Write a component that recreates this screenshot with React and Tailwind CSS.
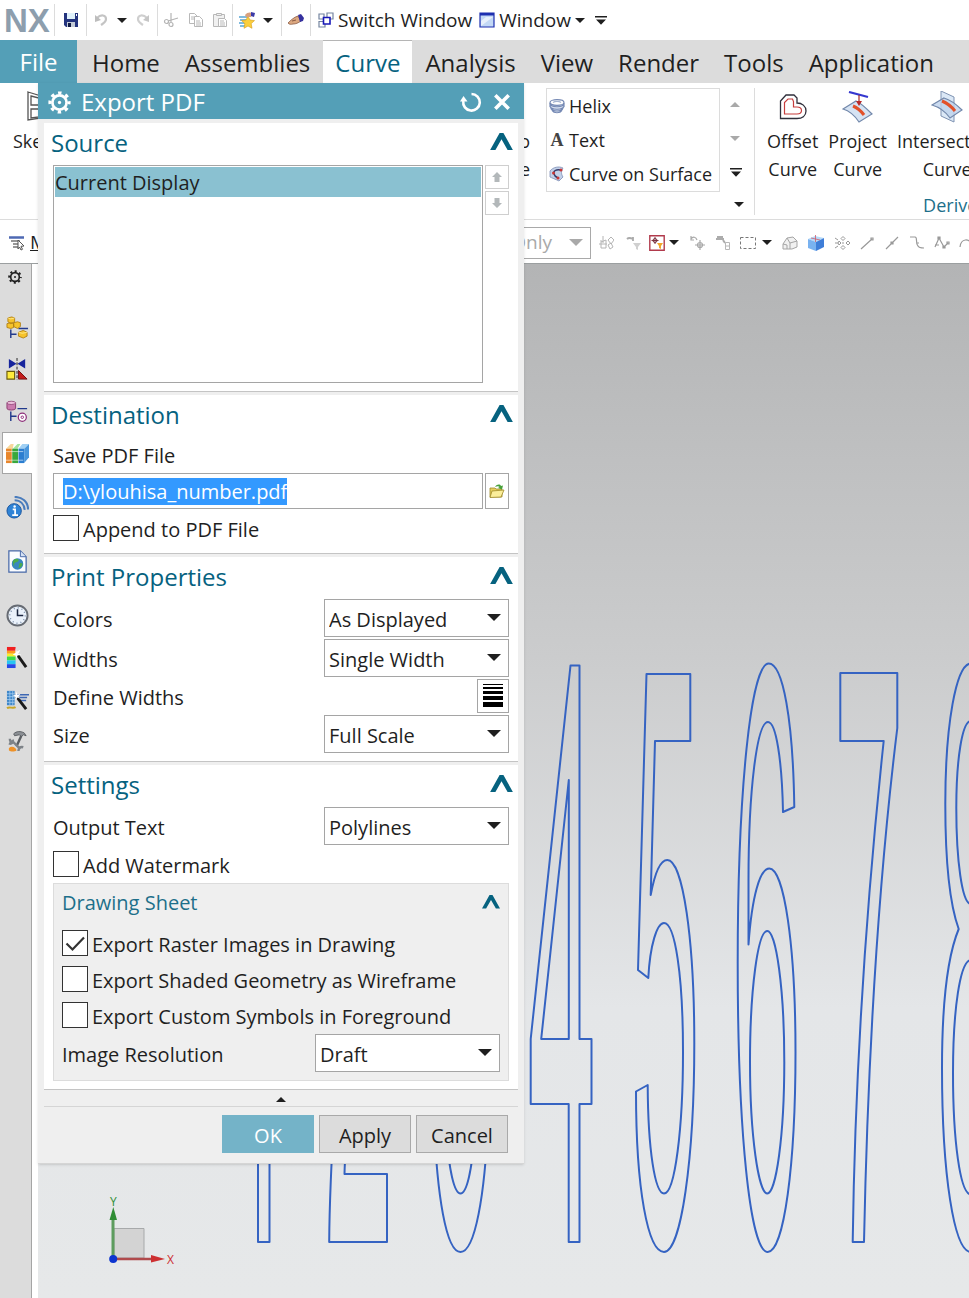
import React, { useEffect, useRef, useState } from 'react';

const Caret = ({ className = "w-2.5", up = false }) => (
  <svg viewBox="0 0 10 5" className={className} fill="currentColor" aria-hidden="true">
    <path d={up ? "M0 5 5 0l5 5z" : "M0 0h10L5 5z"} />
  </svg>
);

const MoreCaret = () => (
  <svg viewBox="0 0 12 9" className="w-3" fill="currentColor" aria-hidden="true">
    <path d="M0 0h12v1.4H0zM1 3.6h10L6 8.8z" />
  </svg>
);

const Divider = () => <span className="w-px h-8 bg-[#dcdcdc]" />;

const GearIcon = ({ className }) => (
  <svg viewBox="0 0 24 24" className={className} fill="none" stroke="currentColor" aria-hidden="true">
    <circle cx="12" cy="12" r="7.4" strokeWidth="2.8" />
    <circle cx="12" cy="12" r="10" strokeWidth="3.2" strokeDasharray="3.6 4.254" strokeDashoffset="1.8" />
    <circle cx="12" cy="12" r="1.7" fill="currentColor" stroke="none" />
  </svg>
);

const icons = {
  save: (
    <svg viewBox="0 0 16 16" className="w-4">
      <path d="M1 1h14v14H3l-2-2z" fill="#24347e" />
      <path d="M4 1h8v6H4z" fill="#dff1fb" />
      <path d="M4 10h8v5H4z" fill="#c3cbd6" />
      <path d="M5 11h3v4H5z" fill="#111a44" />
      <path d="M13 2h1v2h-1z" fill="#fff" />
    </svg>
  ),
  undo: (
    <svg viewBox="0 0 16 16" className="w-4" fill="none">
      <path d="M4 6c4-4 9-3 9 1 0 3-2 4-5 6" stroke="#c4c4c4" strokeWidth="2.200" />
      <path d="M2 10V3l6 5z" fill="#bdbdbd" />
    </svg>
  ),
  redo: (
    <svg viewBox="0 0 16 16" className="w-4" fill="none">
      <path d="M12 6C8 2 3 3 3 7c0 3 2 4 5 6" stroke="#cfcfcf" strokeWidth="2.200" />
      <path d="M14 10V3L8 8z" fill="#c6c6c6" />
    </svg>
  ),
  cut: (
    <svg viewBox="0 0 16 16" className="w-4" fill="none" stroke="#b5b5b5" strokeWidth="1.200">
      <path d="M8 1v9M15 6 5 9" />
      <circle cx="3.500" cy="9.500" r="2" />
      <circle cx="8" cy="12.500" r="2" />
    </svg>
  ),
  copy: (
    <svg viewBox="0 0 16 16" className="w-4" fill="#fff" stroke="#b8b8b8">
      <path d="M1.500 1.500h5l3 3v7h-8z" />
      <path d="M6.500 4.500h5l3 3v7h-8z" />
      <path d="M3 5h3M3 7h3M8 9h4M8 11h5M8 13h5" />
    </svg>
  ),
  paste: (
    <svg viewBox="0 0 16 16" className="w-4" fill="#f1f1f1" stroke="#b8b8b8">
      <path d="M1.500 2.500h11v12h-11z" />
      <path d="M4.500 1.500h5v2h-5z" />
      <path d="M6.500 6.500h6l2 2v6h-8z" fill="#fff" />
      <path d="M8 9h4M8 11h5M8 13h5" />
    </svg>
  ),
  star: (
    <svg viewBox="0 0 18 18" className="w-[18px]">
      <path d="M1 6h9M2 9h7M1 12h6M2 15h6" stroke="#55a5d5" strokeWidth="1.500" />
      <path d="m10 5 2 4 4.500.6-3.300 3 .8 4.700-4-2.300-4 2.300.8-4.700-3.300-3L8 9z" fill="#fbcf3c" stroke="#d79c18" strokeWidth=".6" />
      <path d="M7 4c2-3 5-3 8-2l-2 4H8z" fill="#d8a17e" />
      <path d="m13 1 4 1-1 4-3-1z" fill="#3b3aa8" />
    </svg>
  ),
  hand: (
    <svg viewBox="0 0 18 18" className="w-[18px]">
      <path d="M1 12c2-2 6-6 10-7l3 5c-3 2-5 3-8 3-2 .5-4 .5-5-1z" fill="#dca880" stroke="#8a5a42" strokeWidth=".8" />
      <path d="m11 4 3-1 3 4-1 3-3 1z" fill="#35319f" />
      <path d="m5 10 4-1" stroke="#8a5a42" />
    </svg>
  ),
  switchWindow: (
    <svg viewBox="0 0 16 16" className="w-4" fill="#fff" strokeWidth="1.200">
      <path d="M1 2h5v5H1zM9 1h6v6H9zM1 9.500h6v5.500H1z" stroke="#7585a0" />
      <path d="M5.500 5.500h6.500V12H5.500z" stroke="#1818b8" strokeWidth="1.600" />
    </svg>
  ),
  window: (
    <svg viewBox="0 0 16 16" className="w-4">
      <path d="M1 1h14v14H1z" fill="#c3d8f5" stroke="#1d2fb0" strokeWidth="1.200" />
      <path d="M1 1h14v2.500H1z" fill="#1d2fb0" />
      <path d="M2 14V9l5-4h7z" fill="#fff" opacity=".6" />
    </svg>
  ),
  sketch: (
    <svg viewBox="0 0 28 34" className="w-7" fill="none" stroke="#555" strokeWidth="1.300">
      <path d="M1 2l26 8v16L1 30z" />
      <path d="M4 6l8 2v7H4zM4 19h8v8l-8 1z" />
    </svg>
  ),
  helix: (
    <svg viewBox="0 0 16 16" className="w-4" fill="none" stroke="#7589b4" strokeWidth="1.200">
      <path d="M1 5v6c3 4 12 4 13 0l1-6z" fill="#d5deee" stroke="none" />
      <ellipse cx="8" cy="4.500" rx="7" ry="2.800" fill="#fff" />
      <path d="M1 5c0 5 14 5 14 0M1 7.500c0 5 14 5 14 0M2 10c1 4 11 4 12 0M3 12.500c2 3 8 3 10 0M1 5v4M15 5v4" />
      <path d="M4 4.500c2-1.500 6-1.500 8 0" stroke="#a6b4d0" />
    </svg>
  ),
  curveOnSurface: (
    <svg viewBox="0 0 16 16" className="w-4">
      <path d="M1 5c3-4 9-5 13-3-2 3-2 6 0 9l-4 4C6 13 3 12 1 11z" fill="#c2d0e8" stroke="#7d8eb5" strokeWidth=".8" />
      <path d="M12 4c-5-1-8 1-7 4 .4 2 2 3 4 4" fill="none" stroke="#333b68" strokeWidth="1.400" />
      <circle cx="12" cy="4" r="1.500" fill="#c93636" />
      <circle cx="4.500" cy="7" r="1.500" fill="#c93636" />
      <circle cx="9" cy="12" r="1.500" fill="#c93636" />
    </svg>
  ),
  offset: (
    <svg viewBox="0 0 28 28" className="w-7" fill="none">
      <path d="M1.500 25.500V8L7 2h8l3 3v5c5 0 9 3 9 8s-4 7.500-9 7.500z" stroke="#2f2f3b" strokeWidth="1.300" />
      <path d="M5.500 21V9.500L9 6h4.500l1 2.500V14H18c3 0 4.500 1.500 4.500 3.500S21 21 18 21z" stroke="#c63d3d" strokeWidth="1.200" />
    </svg>
  ),
  project: (
    <svg viewBox="0 0 32 32" className="w-8">
      <path d="M1 18 14 10c5 2 10 7 16 13L17 31C13 25 8 20 1 18z" fill="#d6e3f3" stroke="#7288ab" strokeWidth="1.200" />
      <path d="M11 15c5 2 8 5 11 9" fill="none" stroke="#e2512a" strokeWidth="3" />
      <path d="M7 1l19 5" stroke="#3537cf" strokeWidth="2.200" />
      <path d="M17 4v8" stroke="#a42828" strokeWidth="1.200" />
      <path d="M14 10h6l-3 5z" fill="#b92a2a" />
    </svg>
  ),
  intersect: (
    <svg viewBox="0 0 32 32" className="w-8">
      <path d="M10 0 23 6v25l-13-6z" fill="#dbe8f6" stroke="#7e92b2" />
      <path d="M1 14 13 7c7 2 12 6 18 12l-12 8C14 20 8 16 1 14z" fill="#bed2ec" fillOpacity=".8" stroke="#7288ab" strokeWidth="1.200" />
      <path d="M11 10c5 2 9 5 13 10" fill="none" stroke="#e2512a" strokeWidth="3" />
    </svg>
  ),
  menu: (
    <svg viewBox="0 0 18 16" className="w-[18px]" fill="none">
      <path d="M1 2.500h15" stroke="#4e69b3" strokeWidth="2.500" />
      <path d="M3 6h9M5 9h7M5 12h7" stroke="#777" strokeWidth="1.300" />
      <path d="m10 5 6 6-3 .3 1.500 3-1.500.7-1.500-3L10 14z" fill="#fff" stroke="#555" />
    </svg>
  ),
  openFile: (
    <svg viewBox="0 0 16 16" className="w-4">
      <path d="M1 5h5l1 1h6v8H1z" fill="#e4cd5c" stroke="#a08a2a" strokeWidth=".8" />
      <path d="m3 8 12-1-3 7-11 .5z" fill="#fbee9a" stroke="#a08a2a" strokeWidth=".8" />
      <path d="M6 4c2-3 5-3 6-1l2-.5-1 4-4-1.500 1.500-1C10 3 8 3 6 4z" fill="#48a13a" />
    </svg>
  ),
};

const selectionTools = [
  {
    name: "Select Features", cell: "w-[30px]",
    art: <path d="M3 5v8h5V5l-5 2M1 9h8M5 1v7M10 5l3-3 3 3-3 4zM10 10l3-2 2 4-3 2z" stroke="#b4b4b4" />,
  },
  {
    name: "Selection Filter", cell: "w-[25px]",
    art: (
      <g>
        <path d="M1 4c2-2 4-1 6 0M7 2v4" stroke="#aaa" strokeWidth="1.800" />
        <path d="M7 8h8l-3 4v3l-2-1v-2z" fill="#d0d0d0" />
      </g>
    ),
  },
  {
    name: "Snap Point Filter", cell: "w-[22px]",
    art: (
      <g>
        <path d="M.8.8h14.400v14.400H.8z" stroke="#b13a4c" strokeWidth="1.400" />
        <path d="M6 2v7M2.500 5.500h7" stroke="#7a3340" />
        <circle cx="6" cy="5.500" r="2" stroke="#7a3340" />
        <path d="M8 8h6l-2 3v3l-2-1v-2z" fill="#f2a62c" />
      </g>
    ),
    menu: true,
  },
  {
    name: "Reset Filters", cell: "w-[26px]",
    art: <path d="M2 4c2-3 5-2 6 1M2 1v4h3M11 5v10M6 10h10M8.500 10a2.500 2.500 0 1 0 5 0 2.500 2.500 0 0 0-5 0" stroke="#a8a8a8" strokeWidth="1.200" />,
  },
  {
    name: "Top Selection", cell: "w-[25px]",
    art: (
      <g>
        <path d="M1 4h8M2 2h6M8 5l2 3" stroke="#acacac" strokeWidth="2" />
        <path d="M10.500 7.500h4v7h-4zM10 11h5" stroke="#b8b8b8" />
      </g>
    ),
  },
  {
    name: "Rectangle Select", cell: "w-[26px]",
    art: <path d="M.5 2.500h15v11H.5z" stroke="#777" strokeDasharray="3 2" />,
    menu: true,
  },
  {
    name: "Highlight Hidden", cell: "w-[26px]",
    art: (
      <g>
        <path d="m1 9 4-6 6-1 4 4v6l-5 2H1z" fill="#f1f1f1" stroke="#a5a5a5" />
        <path d="m5 3 3 5 7-2M8 8v6M1 9l4 1v4" stroke="#a5a5a5" />
      </g>
    ),
  },
  {
    name: "Shaded View", cell: "w-[26px]",
    art: (
      <g>
        <path d="m0 4 7-3 9 2-8 4z" fill="#b5daf9" />
        <path d="m0 4 8 3v9l-8-3z" fill="#79b2f0" />
        <path d="m8 7 8-4v9l-8 4z" fill="#3f7ed8" />
        <path d="M7.500 0v7M3 3l9 2" stroke="#cf5a68" strokeWidth=".8" />
      </g>
    ),
  },
  {
    name: "Fit to Selection", cell: "w-[25px]",
    art: <path d="M1 3l3 2M1 8h3M1 13l3-2M9 1.500l2 2-2 2-2-2zM9 10.500l2 2-2 2-2-2zM5 6l2 2-2 2-1-2zM14 6l2 2-2 2-2-2zM9 7v2" stroke="#999" />,
  },
  { name: "Snap End Point", cell: "w-[26px]", art: <path d="M2 14 13 4M12 3h2v2h-2z" stroke="#999" strokeWidth="1.200" /> },
  { name: "Snap Mid Point", cell: "w-[24px]", art: <path d="M2 14 14 2M7 7h2v2H7z" stroke="#999" strokeWidth="1.200" /> },
  { name: "Snap Tangent", cell: "w-[25px]", art: <path d="M1 2h5c3 0 0 6 3 9 1 2 3 2 6 2M8 8h2" stroke="#999" strokeWidth="1.200" /> },
  { name: "Snap Pole", cell: "w-[25px]", art: <path d="M1 12 5 3l5 9 4-4M4 2h2v2H4zM9 11h2v2H9zM13 7h2v2h-2zM1 10h4" stroke="#999" strokeWidth="1.200" /> },
  { name: "Snap Arc", cell: "w-[25px]", art: <path d="M1 12c1-9 9-9 13-2" stroke="#999" strokeWidth="1.200" /> },
];

const railGroups = [
  [
    {
      name: "Assembly Navigator",
      art: (
        <g>
          <path d="M5 14v9M5 19h6M13 13h10" stroke="#223a8c" strokeWidth="1.500" />
          <path d="m2 2 4-1 3 1v4l-4 2-3-2zM1 8l4-1 3 1v4l-3 1-4-1zM8 7l4-1 3 1v4l-3 2-4-2zM13 17l5-2 4 2v4l-4 2-5-2z" fill="#f6c32c" stroke="#b07e10" strokeWidth=".9" />
          <path d="m2 2 3 1 4-1M13 17l4 1 5-1" stroke="#fff0a0" strokeWidth=".8" />
        </g>
      ),
    },
    {
      name: "Constraint Navigator",
      art: (
        <g>
          <path d="M3 1v10l8-5zM20 1v10l-8-5z" fill="#16249c" />
          <path d="M11.500 0v23" stroke="#222" strokeDasharray="3 1.500" />
          <path d="M1 14h8v8H1z" fill="#ffec3b" stroke="#6b5b0a" strokeWidth="1.200" />
          <path d="M13 13v9h9z" fill="#c31d1d" stroke="#701010" />
        </g>
      ),
    },
    {
      name: "Part Navigator",
      art: (
        <g>
          <path d="M5 12v10M5 17h6M12 9h10" stroke="#223a8c" strokeWidth="1.500" />
          <path d="M1 3v6c1 2 8 2 9 0V3z" fill="#cb7bae" stroke="#8b3d70" />
          <ellipse cx="5.500" cy="3" rx="4.500" ry="1.700" fill="#edc0dc" stroke="#8b3d70" strokeWidth=".8" />
          <circle cx="17" cy="18" r="4.200" fill="#fff" stroke="#8e2f7a" strokeWidth="1.300" />
          <circle cx="17" cy="18" r="1.300" stroke="#8e2f7a" />
        </g>
      ),
    },
    {
      name: "Reuse Library", active: true,
      art: (
        <g>
          <path d="m0 7 5-5h3L7 7z" fill="#f7d79a" />
          <path d="M0 7h6v15H0z" fill="#e8862c" />
          <path d="m7 7 5-5h3l-3 5z" fill="#a4e3a0" />
          <path d="M6.500 7h6v15h-6z" fill="#39a83c" />
          <path d="m13 7 4-5h7l-5 5z" fill="#a0d0f4" />
          <path d="M13 7h6v15h-6z" fill="#2c7ed0" />
          <path d="m19 7 5-5v14l-5 6z" fill="#4a97dc" />
          <path d="M0 10h18M0 19h18" stroke="#fff" strokeOpacity=".6" />
        </g>
      ),
    },
  ],
  [
    {
      name: "HD3D Tools",
      art: (
        <g>
          <circle cx="8.500" cy="15.500" r="7.500" fill="#2f83d6" stroke="#1a559e" />
          <path d="M7 14h2.500v6M6.500 20h6" stroke="#fff" strokeWidth="1.800" />
          <circle cx="9" cy="11" r="1.300" fill="#fff" />
          <path d="M9 4.500c6 0 10 4 10.500 10M9 1c8 0 14 5 14 13" stroke="#4a7cbc" strokeWidth="2.200" />
        </g>
      ),
    },
  ],
  [
    {
      name: "Web Browser",
      art: (
        <g>
          <path d="M3 1h12l6 6v16H3z" fill="#fafcff" stroke="#4768a8" strokeWidth="1.300" />
          <path d="M15 1v6h6" fill="#d5e2f5" stroke="#4768a8" />
          <circle cx="12" cy="14.500" r="6" fill="#3887bf" />
          <path d="M7 12c2-4 5-3 6-2s-1 3-3 3-1 3-2 4M14 14c2-1 4 0 3 2s-3 3-4 3z" fill="#4cab4a" />
        </g>
      ),
    },
  ],
  [
    {
      name: "History",
      art: (
        <g>
          <circle cx="12" cy="12" r="10.500" fill="#eaf1fa" stroke="#666b73" strokeWidth="2" />
          <circle cx="12" cy="12" r="8" stroke="#7589a5" strokeWidth="1.500" strokeDasharray="1 3.189" />
          <path d="M12 5.500V12h6" stroke="#1b2640" strokeWidth="1.600" />
        </g>
      ),
    },
    {
      name: "Materials",
      art: (
        <g>
          <path d="M1 1h9v4H1z" fill="#f02020" />
          <path d="M1 5h9v3H1z" fill="#ff9c1c" />
          <path d="M1 8h9v3H1z" fill="#f8ee2a" />
          <path d="M1 11h9v4H1z" fill="#3edc4a" />
          <path d="M1 15h9v4H1z" fill="#27c4f2" />
          <path d="M1 19h9v4H1z" fill="#2648e8" />
          <path d="m11 8 10 14" stroke="#1a1a1a" strokeWidth="3" />
          <path d="m10 2 1 4 4-2-2 4 3 1-4 1-1 3-1-3-3-1 3-2z" fill="#fff" />
        </g>
      ),
    },
    {
      name: "Process Studio",
      art: (
        <g>
          <path d="M1 3h8v15H1z" fill="#3e86c8" />
          <path d="M1 6h8M1 9h8M1 12h8M1 15h8M4 3v15M7 3v15" stroke="#a5cdf0" strokeWidth=".8" />
          <path d="M10 7h14M13 10h9M14 13h7" stroke="#3d67b3" strokeWidth="1.600" />
          <path d="M1 21c3-2 6 1 9-1" stroke="#c7a62a" strokeWidth="2" />
          <path d="m11 9 10 13" stroke="#1a1a1a" strokeWidth="3" />
          <path d="m11 4 1 3 3-1-2 3 2 2-3-1-2 3v-4l-3-1 3-1z" fill="#fff" />
        </g>
      ),
    },
    {
      name: "Manufacturing Wizard",
      art: (
        <g>
          <path d="M8 4c3-3 7-3 11-1l2 3-3-1-2 2-2-2-5 1z" fill="#8b8f94" stroke="#4b4f53" strokeWidth=".8" />
          <path d="m16 6-5 11" stroke="#5a5e62" strokeWidth="2.500" />
          <path d="M4 9c0 3 2 4 4 4l7 7M3 14c3 1 5-1 4-4M13 22c0-3 2-5 5-4" stroke="#7e8388" strokeWidth="2.500" />
          <path d="M3 19c3-3 7-1 8 2-2 2-6 2-8 0z" fill="#ee9229" />
        </g>
      ),
    },
  ],
];

const tabs = ["Home", "Assemblies", "Curve", "Analysis", "View", "Render", "Tools", "Application"];

const QuickAccessBar = () => (
  <header className="flex items-center h-10 shrink-0 bg-white text-[19px] whitespace-nowrap">
    <span className="w-[54px] pl-1 pt-0.5 font-['Liberation_Sans'] font-bold text-[33px] leading-9 text-[#8d9ead]">NX</span>
    <Divider />
    <button aria-label="Save" className="w-[31px] flex justify-center">{icons.save}</button>
    <Divider />
    <button aria-label="Undo" className="w-7 flex justify-center">{icons.undo}</button>
    <button aria-label="Undo list" className="w-3.5 flex justify-center"><Caret /></button>
    <button aria-label="Redo" className="w-7 flex justify-center">{icons.redo}</button>
    <Divider />
    <button aria-label="Cut" className="w-[26px] flex justify-center">{icons.cut}</button>
    <button aria-label="Copy" className="w-6 flex justify-center">{icons.copy}</button>
    <button aria-label="Paste" className="w-6 flex justify-center">{icons.paste}</button>
    <Divider />
    <button aria-label="Repeat command" className="w-7 flex justify-center">{icons.star}</button>
    <button aria-label="Repeat list" className="w-5 pl-0.5"><Caret /></button>
    <Divider />
    <button aria-label="Touch mode" className="w-7 flex justify-center">{icons.hand}</button>
    <Divider />
    <button className="flex items-center gap-1 ml-[7px]">{icons.switchWindow}Switch Window</button>
    <button className="flex items-center gap-1 ml-[7px]">{icons.window}Window<Caret /></button>
    <button aria-label="Customize toolbar" className="ml-2.5"><MoreCaret /></button>
  </header>
);

const TabBar = () => (
  <nav className="flex gap-px h-[43px] shrink-0 bg-[#dcdcdc] text-2xl whitespace-nowrap overflow-hidden">
    <button className="w-[77px] mr-0.5 shrink-0 bg-[#549fb7] text-white">File</button>
    {tabs.map((tab) => (
      <button
        key={tab}
        className={`px-3 pt-0.5 ${tab === "Curve" ? "bg-white text-[#06627f] border-t border-[#b5b5b5]" : ""}`}
      >
        {tab}
      </button>
    ))}
  </nav>
);

const RibbonButton = ({ icon, lines, align = "items-center" }) => (
  <button className={`flex flex-col shrink-0 ${align}`}>
    <span className="h-10 flex items-center">{icon}</span>
    {lines.map((line) => <span key={line}>{line}</span>)}
  </button>
);

const Ribbon = () => (
  <div className="flex h-[137px] shrink-0 border-b border-[#dcdcdc] bg-white text-lg leading-7 overflow-hidden whitespace-nowrap">
    <div className="w-[530px] shrink-0 flex items-start justify-between pl-[13px] pt-1">
      <RibbonButton icon={icons.sketch} lines={["Sketch"]} />
      <RibbonButton lines={["Studio", "Spline"]} align="items-end" />
    </div>
    <div className="ml-4 mt-[5px] shrink-0 self-start border border-[#dcdcdc] flex flex-col pr-[7px]">
      <button className="flex items-center gap-1 h-[34px] pl-0.5">{icons.helix}Helix</button>
      <button className="flex items-center gap-1 h-[34px] pl-0.5">
        <span className="w-4 font-['Liberation_Serif'] font-bold text-[#444]">A</span>Text
      </button>
      <button className="flex items-center gap-1 h-[34px] pl-0.5">{icons.curveOnSurface}Curve on Surface</button>
    </div>
    <div className="w-[34px] pl-2.5 shrink-0 flex flex-col items-start mt-[5px]">
      <button aria-label="Scroll up" className="h-[34px] text-[#a9a9a9]"><Caret up /></button>
      <button aria-label="Scroll down" className="h-[34px] text-[#a9a9a9]"><Caret /></button>
      <button aria-label="More curves" className="h-[34px]"><MoreCaret /></button>
      <button aria-label="Group options" className="h-[30px] pl-1"><Caret /></button>
    </div>
    <span className="w-px h-[127px] mt-[5px] bg-[#dcdcdc] shrink-0" />
    <div className="flex-1 min-w-0 flex flex-col pl-3">
      <div className="flex gap-2.5 pt-1">
        <RibbonButton icon={icons.offset} lines={["Offset", "Curve"]} />
        <RibbonButton icon={icons.project} lines={["Project", "Curve"]} />
        <RibbonButton icon={icons.intersect} lines={["Intersection", "Curve"]} />
      </div>
      <span className="pl-39 pt-2 text-[#1d6f8a]">Derived Curve</span>
    </div>
  </div>
);

const SelectionBar = () => (
  <div className="flex items-center h-11 pt-0.5 shrink-0 bg-white border-b border-[#9b9fa0] text-[19px] overflow-hidden">
    <div className="w-[591px] shrink-0 flex items-center justify-between">
      <button className="flex items-center gap-1 pl-2">
        {icons.menu}
        <span><u>M</u>enu</span>
      </button>
      <div className="relative text-[#a9a9a9]">
        <select aria-label="Selection scope" disabled className="appearance-none block w-60 h-8 pl-1 border border-[#a9a9a9] bg-white">
          <option>Within Work Part Only</option>
        </select>
        <Caret className="w-3.5 absolute right-2 top-3 pointer-events-none" />
      </div>
    </div>
    {selectionTools.map((tool) => (
      <React.Fragment key={tool.name}>
        <button aria-label={tool.name} className={`${tool.cell} shrink-0 flex justify-center`}>
          <svg viewBox="0 0 16 16" className="w-4" fill="none">{tool.art}</svg>
        </button>
        {tool.menu && (
          <button aria-label={`${tool.name} options`} className="w-3 mr-1 shrink-0 flex justify-center"><Caret /></button>
        )}
      </React.Fragment>
    ))}
  </div>
);

const ResourceRail = () => (
  <aside className="w-8 shrink-0 bg-[#dcdcdc] border-r border-[#a5a5a5]">
    <button aria-label="Resource bar options" className="w-full h-[26px] pr-px flex items-center justify-center">
      <GearIcon className="w-3.5" />
    </button>
    <div className="flex flex-col gap-3 pt-4">
      {railGroups.map((group, i) => (
        <div key={i}>
          {group.map((item) => (
            <button
              key={item.name}
              aria-label={item.name}
              className={`flex items-center justify-center h-[42px] ${item.active ? "ml-0.5 w-[30px] bg-white border border-r-0 border-[#a5a5a5]" : "w-full pl-[3px]"}`}
            >
              <svg viewBox="0 0 24 24" className="w-[23px]" fill="none">{item.art}</svg>
            </button>
          ))}
        </div>
      ))}
    </div>
  </aside>
);

// Wireframe of the number curves plus the view triad
const Viewport = () => (
  <main className="flex-1 min-w-0 bg-[linear-gradient(to_bottom,#b3b4b5_0%,#cbcccd_38%,#e4e6e8_72%,#e6e8e9_100%)]">
    <svg viewBox="38 264 931 1034" className="block w-full" fill="none">
      <g stroke="#3563c2" strokeWidth="2" strokeLinejoin="round">
        <path d="M258 1100V1242H269.500V1100" />
        <path d="M335 1100Q329.500 1190 329.200 1242H387V1174H344.500Q345 1150 350 1100" />
        <path d="M434 1120C437 1195 446 1252 460.500 1252S485 1195 488 1120" />
        <path d="M446 1130C449 1170 454 1193.500 460.500 1193.500S472 1170 475 1130" />
        <path d="M570.500 665.500H579.500V1039H591.500V1104H579.500V1242H568.700V1104H530.700V1039ZM568.800 780V1039H541.200Z" />
        <path d="M646.500 674H690.300V741H655L650.700 895C655 872 661 860 667.300 860C683 860 694.300 940 694.300 1043C694.300 1160 681 1252 664 1252C648 1252 636 1190 636 1091.500L647.700 1085C648 1150 655 1193.500 664 1193.500C675 1193.500 683 1128 683 1052C683 975 675 923 664 923C657 923 650 945 648.300 978L638 970Z" />
        <path d="M794.300 807L783 812C782 760 776 722 768 722C757 722 748.500 790 748.500 880V944.500C752 896 760 868.500 769.300 868.500C784 868.500 795.500 945 795.500 1052C795.500 1165 784 1252 767.700 1252C750 1252 737.700 1130 737.700 963C737.700 790 751 663.500 768.700 663.500C783 663.500 793 720 794.300 807Z" />
        <path d="M767.300 931C776 931 784.300 988 784.300 1062C784.300 1136 776 1193.500 767.300 1193.500S750 1136 750 1062C750 988 758 931 767.300 931Z" />
        <path d="M840.300 673H897.300V728Q870 950 864 1242H852.700Q856 1000 883.700 741H840.300Z" />
        <path d="M971 663.500C956 663.500 945.300 725 945.300 804C945.300 860 950 905 958.700 929C948 955 942 1005 942 1068C942 1175 954 1252 971 1252" />
        <path d="M971 721C962 721 956.300 760 956.300 808C956.300 860 962 904 971 904" />
        <path d="M971 960C960 960 953 1010 953 1073C953 1140 960 1194.500 971 1194.500" />
      </g>
      <path d="M114 1228.500H144V1258H114Z" fill="#d3d3d3" stroke="#a7a9aa" />
      <path d="M113 1257V1219" stroke="#5d9c5e" strokeWidth="3" />
      <path d="M109.500 1220 113.300 1207 117 1220Z" fill="#2f8d34" />
      <path d="M117 1259H152" stroke="#b04a4c" strokeWidth="2.500" />
      <path d="M151 1255 165 1259 151 1262.500Z" fill="#cd2f31" />
      <circle cx="113.200" cy="1259" r="4" fill="#0d35d0" />
      <text x="110" y="1206" fontSize="12" fill="#2f8d34" fontFamily="Open Sans, sans-serif">Y</text>
      <text x="167" y="1264" fontSize="12" fill="#cd2f31" fontFamily="Open Sans, sans-serif">X</text>
    </svg>
  </main>
);

const Collapse = ({ label, small = false }) => (
  <button aria-label={`Collapse ${label}`} className="text-[#06627f]">
    <svg viewBox="0 0 24 18" className={small ? "w-[18px]" : "w-[23px]"} fill="currentColor">
      <path d="M0 18 10 0h4L24 18h-5.500L12 6.500 5.500 18z" />
    </svg>
  </button>
);

const Section = ({ title, children }) => (
  <section className="mb-[3px] bg-white border-b border-[#c4c4c4] px-[9px] pb-2">
    <div className="flex items-center justify-between h-[42px] -mx-0.5 pb-0.5">
      <h2 className="text-2xl text-[#06627f]">{title}</h2>
      <span className="-mr-0.5"><Collapse label={title} /></span>
    </div>
    {children}
  </section>
);

const SelectRow = ({ id, label, options }) => (
  <div className="flex items-center justify-between">
    <label htmlFor={id} className="pt-[3px]">{label}</label>
    <div className="relative">
      <select id={id} className="appearance-none block w-[185px] h-[38px] pl-1 pt-[3px] border border-[#a5a5a5] bg-white">
        {options.map((option) => <option key={option}>{option}</option>)}
      </select>
      <Caret className="w-3.5 absolute right-2 top-[15px] pointer-events-none" />
    </div>
  </div>
);

const CheckRow = ({ label, checked = false }) => {
  const [on, setOn] = useState(checked);
  return (
    <label className="flex items-center gap-1 h-[26px]">
      <span className="relative">
        <input
          type="checkbox"
          checked={on}
          onChange={() => setOn(!on)}
          className="appearance-none block size-[26px] border border-[#333] bg-white"
        />
        {on && (
          <svg viewBox="0 0 26 26" className="absolute inset-0 pointer-events-none" fill="none" stroke="#333" strokeWidth="2.200">
            <path d="m4.500 13.500 6 6L22 7.500" />
          </svg>
        )}
      </span>
      <span className="pt-[3px]">{label}</span>
    </label>
  );
};

const ArrowGlyph = ({ down = false }) => (
  <svg viewBox="0 0 10 10" className="w-2.5" fill="#b3b8ba">
    <path d={down ? "M2.500 0h5v5H10l-5 5-5-5h2.500z" : "M5 0l5 5H7.500v5h-5V5H0z"} />
  </svg>
);

const ExportDialog = () => {
  const fileRef = useRef(null);

  useEffect(() => {
    fileRef.current.focus();
    fileRef.current.select();
  }, []);

  return (
    <div role="dialog" aria-label="Export PDF" className="absolute left-[38px] top-[83px] w-[486px] bg-[#efefef] border-b border-[#d5d5d5] shadow-sm text-xl">
      <div className="flex items-center h-9 px-2.5 pt-0.5 bg-[#549fb7] text-white">
        <GearIcon className="w-[23px]" />
        <h1 className="ml-2.5 text-2xl">Export PDF</h1>
        <button aria-label="Reset" className="ml-auto">
          <svg viewBox="0 0 22 22" className="w-[22px]" fill="none">
            <path d="M11.500 3A8.300 8.300 0 1 1 3.300 10" stroke="currentColor" strokeWidth="2.600" />
            <path d="M0 10.500 3.500 5l4 5.500z" fill="currentColor" />
          </svg>
        </button>
        <button aria-label="Close" className="ml-3 mr-1">
          <svg viewBox="0 0 16 16" className="w-4" stroke="currentColor" strokeWidth="3.600">
            <path d="m1.300 1.300 13.400 13.400M14.700 1.300 1.300 14.700" />
          </svg>
        </button>
      </div>

      <div className="px-1.5 pt-1">
        <Section title="Source">
          <div className="flex gap-0.5">
            <ul className="flex-1 h-[218px] border border-[#a5a5a5] p-px">
              <li className="h-[30px] leading-8 bg-[#8ac1d1]">Current Display</li>
            </ul>
            <div className="flex flex-col gap-0.5">
              <button aria-label="Move up" className="size-6 flex items-center justify-center border border-[#cfcfcf]"><ArrowGlyph /></button>
              <button aria-label="Move down" className="size-6 flex items-center justify-center border border-[#cfcfcf]"><ArrowGlyph down /></button>
            </div>
          </div>
        </Section>

        <Section title="Destination">
          <label htmlFor="pdf-file" className="block h-9 leading-[38px]">Save PDF File</label>
          <div className="flex gap-0.5 mb-1.5">
            <input
              id="pdf-file"
              ref={fileRef}
              type="text"
              defaultValue="D:\ylouhisa_number.pdf"
              className="flex-1 min-w-0 h-9 pl-[9px] leading-[30px] border border-[#a5a5a5] outline-none selection:bg-[#3399ff] selection:text-white"
            />
            <button aria-label="Browse" className="w-6 flex items-center justify-center border border-[#a5a5a5]">{icons.openFile}</button>
          </div>
          <div className="pb-1"><CheckRow label="Append to PDF File" /></div>
        </Section>

        <Section title="Print Properties">
          <div className="flex flex-col gap-0.5">
            <SelectRow id="colors" label="Colors" options={["As Displayed", "Black on White"]} />
            <SelectRow id="widths" label="Widths" options={["Single Width", "Custom Widths"]} />
            <div className="flex items-center justify-between">
              <label htmlFor="define-widths" className="pt-[3px]">Define Widths</label>
              <button id="define-widths" className="w-8 h-[34px] flex items-center justify-center border border-[#a5a5a5]">
                <svg viewBox="0 0 20 24" className="w-5">
                  <path d="M0 0h20v1H0zM0 3h20v2H0zM0 7h20v3H0zM0 12h20v4H0zM0 18h20v5H0z" />
                </svg>
              </button>
            </div>
            <SelectRow id="size" label="Size" options={["Full Scale", "Scale Factor"]} />
          </div>
        </Section>

        <Section title="Settings">
          <div className="flex flex-col gap-1.5">
            <SelectRow id="output-text" label="Output Text" options={["Polylines", "Text"]} />
            <CheckRow label="Add Watermark" />
            <div className="border border-[#dcdcdc] bg-[#efefef] px-2 pb-2">
              <div className="flex items-center justify-between h-9 mb-2.5">
                <h3 className="pt-0.5 text-[#1d6f8a]">Drawing Sheet</h3>
                <Collapse label="Drawing Sheet" small />
              </div>
              <div className="flex flex-col gap-2.5 mb-1.5">
                <CheckRow label="Export Raster Images in Drawing" checked />
                <CheckRow label="Export Shaded Geometry as Wireframe" />
                <CheckRow label="Export Custom Symbols in Foreground" />
              </div>
              <SelectRow id="resolution" label="Image Resolution" options={["Draft", "Low", "Medium", "High"]} />
            </div>
          </div>
        </Section>

        <button aria-label="Show less" className="w-full h-3.5 flex justify-center items-center border-b border-[#d5d5d5]">
          <Caret up />
        </button>
      </div>

      <div className="flex justify-end gap-[5px] pt-2 pb-2.5 pr-4">
        <button className="w-[92px] h-[38px] pt-[3px] bg-[#74b3c8] text-white">OK</button>
        <button className="w-[92px] h-[38px] pt-[3px] bg-[#dcdcdc] border border-[#a9a9a9]">Apply</button>
        <button className="w-[92px] h-[38px] pt-[3px] bg-[#dcdcdc] border border-[#a9a9a9]">Cancel</button>
      </div>
    </div>
  );
};

const App = () => {
  return (
    <div className="relative min-h-screen flex flex-col bg-white text-[#1f1f1f] overflow-hidden font-['Open_Sans',sans-serif]">
      <QuickAccessBar />
      <TabBar />
      <Ribbon />
      <SelectionBar />
      <div className="flex flex-1">
        <ResourceRail />
        <span className="w-1.5 shrink-0 bg-white" />
        <Viewport />
      </div>
      <ExportDialog />
    </div>
  );
};

export default App;
